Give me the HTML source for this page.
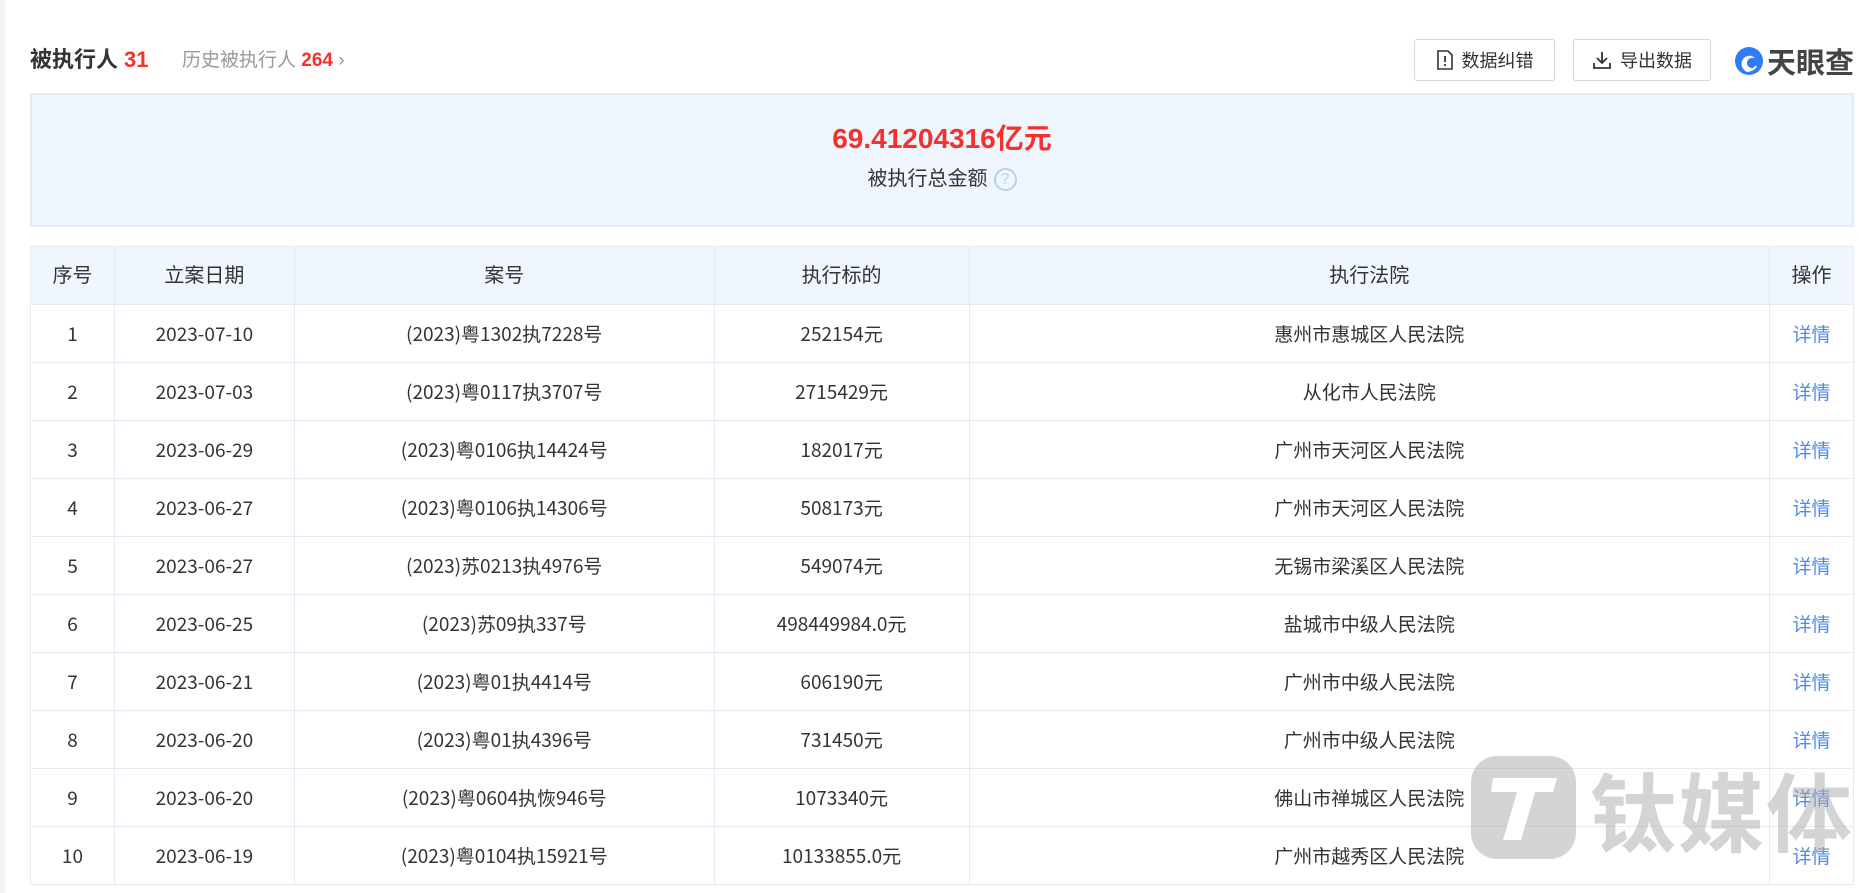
<!DOCTYPE html>
<html><head><meta charset="utf-8"><style>
*{margin:0;padding:0;box-sizing:border-box}
body{width:1875px;height:893px;background:#fff;font-family:"Liberation Sans","Noto Sans CJK SC",sans-serif;color:#333;position:relative;overflow:hidden}
.strip{position:absolute;left:0;top:0;width:5px;height:893px;background:#f3f3f3}
.title{position:absolute;left:30px;top:42px;font-size:22px;font-weight:bold;color:#333}
.title .n{color:#f5302d;margin-left:6px}
.hist{position:absolute;left:182px;top:45px;font-size:19px;color:#999}
.hist b{color:#f5302d}
.btn{position:absolute;top:39px;height:42px;border:1px solid #d9d9d9;border-radius:3px;font-size:18px;color:#333;display:flex;align-items:center;justify-content:center;gap:8px;background:#fff}
.logo{position:absolute;left:1734px;top:40px;display:flex;align-items:center;gap:3px;font-size:29px;font-weight:bold;color:#444}
.sum{position:absolute;left:30px;top:93px;width:1824px;height:134px;background:#f0f6fe;border:2px solid #e2ebf6;text-align:center}
.amt{margin-top:26px;font-size:28px;font-weight:bold;color:#f5302d;line-height:36px}
.lbl{margin-top:8px;font-size:20px;color:#333;line-height:28px}
.q{display:inline-block;width:23px;height:23px;border:2px solid #b8d1ea;border-radius:50%;color:#b8d1ea;font-size:16px;line-height:19px;vertical-align:middle;margin-left:6px}
table{position:absolute;left:30px;top:246px;width:1824px;border-collapse:collapse;font-size:20px}
td,th{border:1px solid #e4ebf5;height:58px;text-align:center;font-weight:normal;line-height:24px;padding:0}
td{font-family:"Noto Sans CJK SC","Liberation Sans",sans-serif;font-size:19px}
th{background:#f0f6fe}
td.d{color:#4a8bf5}
.wm{position:absolute;left:1471px;top:756px;display:flex;align-items:center;gap:14px;white-space:nowrap;pointer-events:none}
.wm .box{width:105px;height:103px;border-radius:26px;background:rgba(170,170,170,.5);flex:none}
.wm .t{font-size:86px;line-height:103px;font-weight:bold;color:rgba(170,170,170,.5);letter-spacing:2px;font-family:"Noto Sans CJK SC",sans-serif}
</style></head><body>
<div class="strip"></div>
<div class="title">被执行人<span class="n">31</span></div>
<div class="hist">历史被执行人 <b>264</b> ›</div>
<div class="btn" style="left:1414px;width:141px"><svg width="18" height="20" viewBox="0 0 18 20"><path d="M2 1h10l4 4v14H2z" fill="none" stroke="#333" stroke-width="1.6"/><path d="M9 6v6M9 14v2" stroke="#333" stroke-width="1.8"/></svg>数据纠错</div>
<div class="btn" style="left:1573px;width:138px"><svg width="20" height="20" viewBox="0 0 20 20"><path d="M10 2v11M5 8l5 5 5-5M2 13v5h16v-5" fill="none" stroke="#333" stroke-width="1.8"/></svg>导出数据</div>
<div class="logo"><svg width="30" height="30" viewBox="0 0 30 30"><circle cx="15" cy="15" r="14" fill="#2f7cf6"/><path d="M13 26c-6-3-7-10-3-14 3-3 8-3 11 0-4-1-8 1-8 5 0 4 4 6 8 5-3 3-6 4-8 4z" fill="#fff"/><path d="M22 20a8 8 0 0 1-9 4" stroke="#fff" stroke-width="2" fill="none"/></svg>天眼查</div>
<div class="sum"><div class="amt">69.41204316亿元</div><div class="lbl">被执行总金额<span class="q">?</span></div></div>
<table>
<colgroup><col style="width:84px"><col style="width:180px"><col style="width:420px"><col style="width:255px"><col style="width:801px"><col style="width:84px"></colgroup>
<tr><th>序号</th><th>立案日期</th><th>案号</th><th>执行标的</th><th>执行法院</th><th>操作</th></tr>
<tr><td>1</td><td>2023-07-10</td><td>(2023)粤1302执7228号</td><td>252154元</td><td>惠州市惠城区人民法院</td><td class="d">详情</td></tr>
<tr><td>2</td><td>2023-07-03</td><td>(2023)粤0117执3707号</td><td>2715429元</td><td>从化市人民法院</td><td class="d">详情</td></tr>
<tr><td>3</td><td>2023-06-29</td><td>(2023)粤0106执14424号</td><td>182017元</td><td>广州市天河区人民法院</td><td class="d">详情</td></tr>
<tr><td>4</td><td>2023-06-27</td><td>(2023)粤0106执14306号</td><td>508173元</td><td>广州市天河区人民法院</td><td class="d">详情</td></tr>
<tr><td>5</td><td>2023-06-27</td><td>(2023)苏0213执4976号</td><td>549074元</td><td>无锡市梁溪区人民法院</td><td class="d">详情</td></tr>
<tr><td>6</td><td>2023-06-25</td><td>(2023)苏09执337号</td><td>498449984.0元</td><td>盐城市中级人民法院</td><td class="d">详情</td></tr>
<tr><td>7</td><td>2023-06-21</td><td>(2023)粤01执4414号</td><td>606190元</td><td>广州市中级人民法院</td><td class="d">详情</td></tr>
<tr><td>8</td><td>2023-06-20</td><td>(2023)粤01执4396号</td><td>731450元</td><td>广州市中级人民法院</td><td class="d">详情</td></tr>
<tr><td>9</td><td>2023-06-20</td><td>(2023)粤0604执恢946号</td><td>1073340元</td><td>佛山市禅城区人民法院</td><td class="d">详情</td></tr>
<tr><td>10</td><td>2023-06-19</td><td>(2023)粤0104执15921号</td><td>10133855.0元</td><td>广州市越秀区人民法院</td><td class="d">详情</td></tr>
</table>
<div class="wm"><div class="box"><svg width="105" height="103" viewBox="0 0 105 103"><path d="M22 22h64l-4 14H64l-14 48H32l14-48H20z" fill="#fff"/></svg></div><div class="t">钛媒体</div></div>
</body></html>
